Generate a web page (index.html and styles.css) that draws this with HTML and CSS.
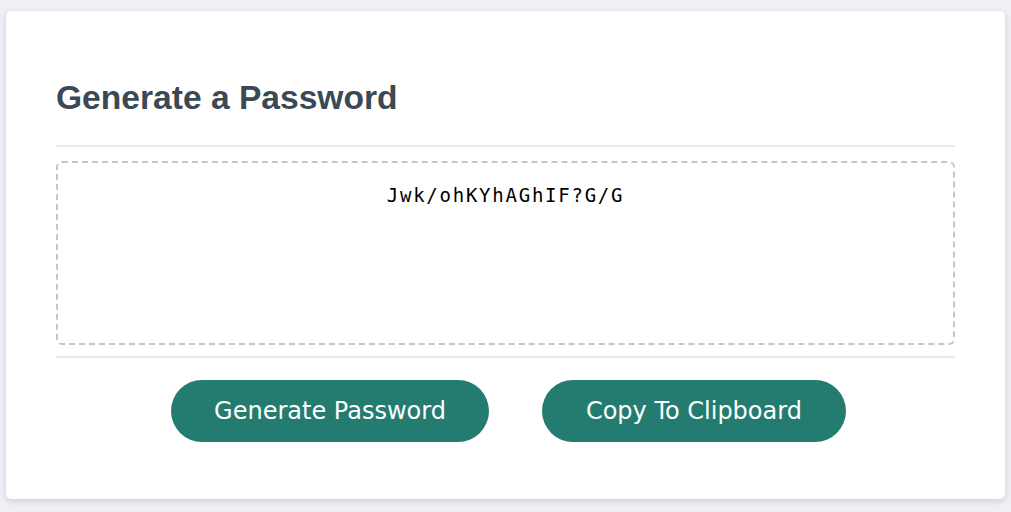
FILE: index.html
```html
<!DOCTYPE html>
<html lang="en">
<head>
<meta charset="UTF-8">
<title>Password Generator</title>
<link rel="stylesheet" href="styles.css">
</head>
<body>
<div class="wrapper">
  <div class="card">
    <div class="card-header">
      <h2 class="title">Generate a Password</h2>
    </div>
    <div class="card-body">
      <textarea readonly class="password" aria-label="Generated Password">Jwk/ohKYhAGhIF?G/G</textarea>
    </div>
    <div class="card-footer">
      <button class="btn btn-generate">Generate Password</button><button class="btn btn-copy">Copy To Clipboard</button>
    </div>
  </div>
</div>
</body>
</html>
```

FILE: styles.css
```css
*, *::before, *::after { box-sizing: border-box; }
html, body { margin: 0; padding: 0; height: 100%; }
body {
  background: #eff0f5;
  font-family: "Liberation Sans", Arial, sans-serif;
}
.wrapper {
  padding: 11px 6px 13px;
}
.card {
  background: #ffffff;
  border-radius: 5px;
  box-shadow: rgba(0, 0, 0, 0.15) 0 2px 6px 0;
  padding: 67px 50px 57px;
}
.card-header::after {
  content: "";
  display: block;
  height: 2px;
  background: #e7e9eb;
  margin-top: 27px;
}
.title {
  margin: 0;
  font-size: 33.6px;
  line-height: 40px;
  font-weight: bold;
  color: hsl(206, 17%, 28%);
}
.card-body {
  padding-top: 14px;
  padding-bottom: 11px;
}
.password {
  display: block;
  width: 100%;
  height: 184px;
  border: 2px dashed #c0c7cf;
  border-radius: 6px;
  resize: none;
  overflow: hidden;
  text-align: center;
  padding: 20px 15px 0;
  font-family: "DejaVu Sans Mono", monospace;
  font-size: 19px;
  letter-spacing: 1.75px;
  line-height: 24px;
  color: #000;
  background: #fff;
  outline: none;
}
.card-footer {
  display: flex;
  justify-content: center;
  gap: 53px;
  padding-left: 6px;
  border-top: 2px solid #e7e9eb;
  padding-top: 22px;
}
.btn {
  border: none;
  background: #237c6f;
  color: #fff;
  border-radius: 31px;
  height: 62px;
  font-family: "DejaVu Sans", Verdana, sans-serif;
  font-size: 24px;
  line-height: 62px;
  padding: 0 43px;
  cursor: pointer;
}
.btn-copy {
  padding: 0 44px;
}
```
